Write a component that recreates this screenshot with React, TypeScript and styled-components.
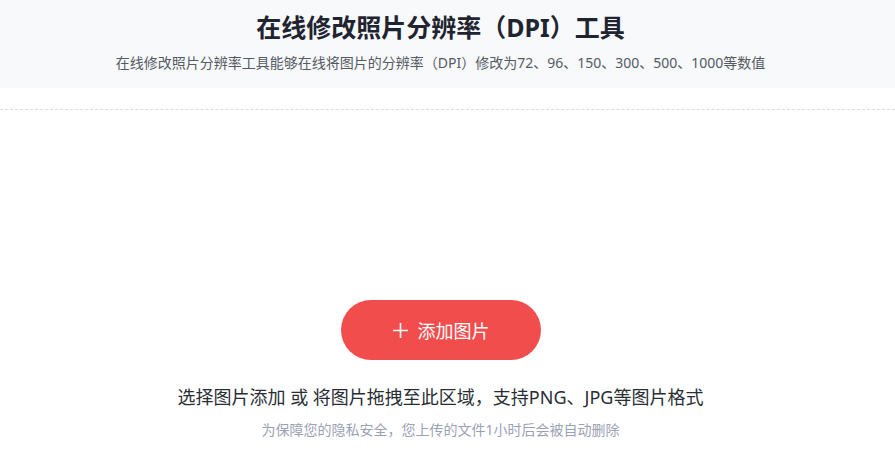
import React from 'react'
import styled, { createGlobalStyle } from 'styled-components'

const GlobalStyle = createGlobalStyle`
  html, body {
    margin: 0;
    padding: 0;
    background: #fff;
    font-family: "Noto Sans", "Noto Sans CJK SC", sans-serif;
  }
`

const Header = styled.header`
  height: 88px;
  background: #f8f9fb;
  display: flex;
  flex-direction: column;
  align-items: center;
  box-sizing: border-box;
  padding: 9px 14px 0 0;
`

const Title = styled.h1`
  margin: 0;
  font-size: 25px;
  line-height: 36px;
  font-weight: 700;
  color: #1f2430;
`

const Subtitle = styled.p`
  margin: 8px 0 0;
  font-size: 14px;
  line-height: 20px;
  color: #555a64;
`

const DropZone = styled.section`
  margin-top: 21px;
  border-top: 1px dashed #dcdcdc;
  display: flex;
  flex-direction: column;
  align-items: center;
  padding: 190px 14px 0 0;
`

const AddButton = styled.button`
  width: 200px;
  height: 60px;
  border: none;
  border-radius: 30px;
  background: #f14d4d;
  color: #fff;
  font-family: inherit;
  font-size: 18px;
  display: flex;
  align-items: center;
  justify-content: center;
  gap: 9px;
  cursor: pointer;
  padding: 0;
`

const Hint = styled.p`
  margin: 25px 0 0;
  font-size: 18px;
  line-height: 24px;
  color: #2a2d34;
`

const Notice = styled.p`
  margin: 11px 0 0;
  font-size: 14px;
  line-height: 20px;
  color: #9aa1b5;
`

const PlusIcon = () => (
  <svg width="17" height="17" viewBox="0 0 17 17" fill="none">
    <path d="M8.5 1v15M1 8.5h15" stroke="#fff" strokeWidth="1.6" />
  </svg>
)

export default function App() {
  return (
    <>
      <GlobalStyle />
      <Header>
        <Title>在线修改照片分辨率（DPI）工具</Title>
        <Subtitle>
          在线修改照片分辨率工具能够在线将图片的分辨率（DPI）修改为72、96、150、300、500、1000等数值
        </Subtitle>
      </Header>
      <DropZone>
        <AddButton>
          <PlusIcon />
          添加图片
        </AddButton>
        <Hint>选择图片添加 或 将图片拖拽至此区域，支持PNG、JPG等图片格式</Hint>
        <Notice>为保障您的隐私安全，您上传的文件1小时后会被自动删除</Notice>
      </DropZone>
    </>
  )
}
